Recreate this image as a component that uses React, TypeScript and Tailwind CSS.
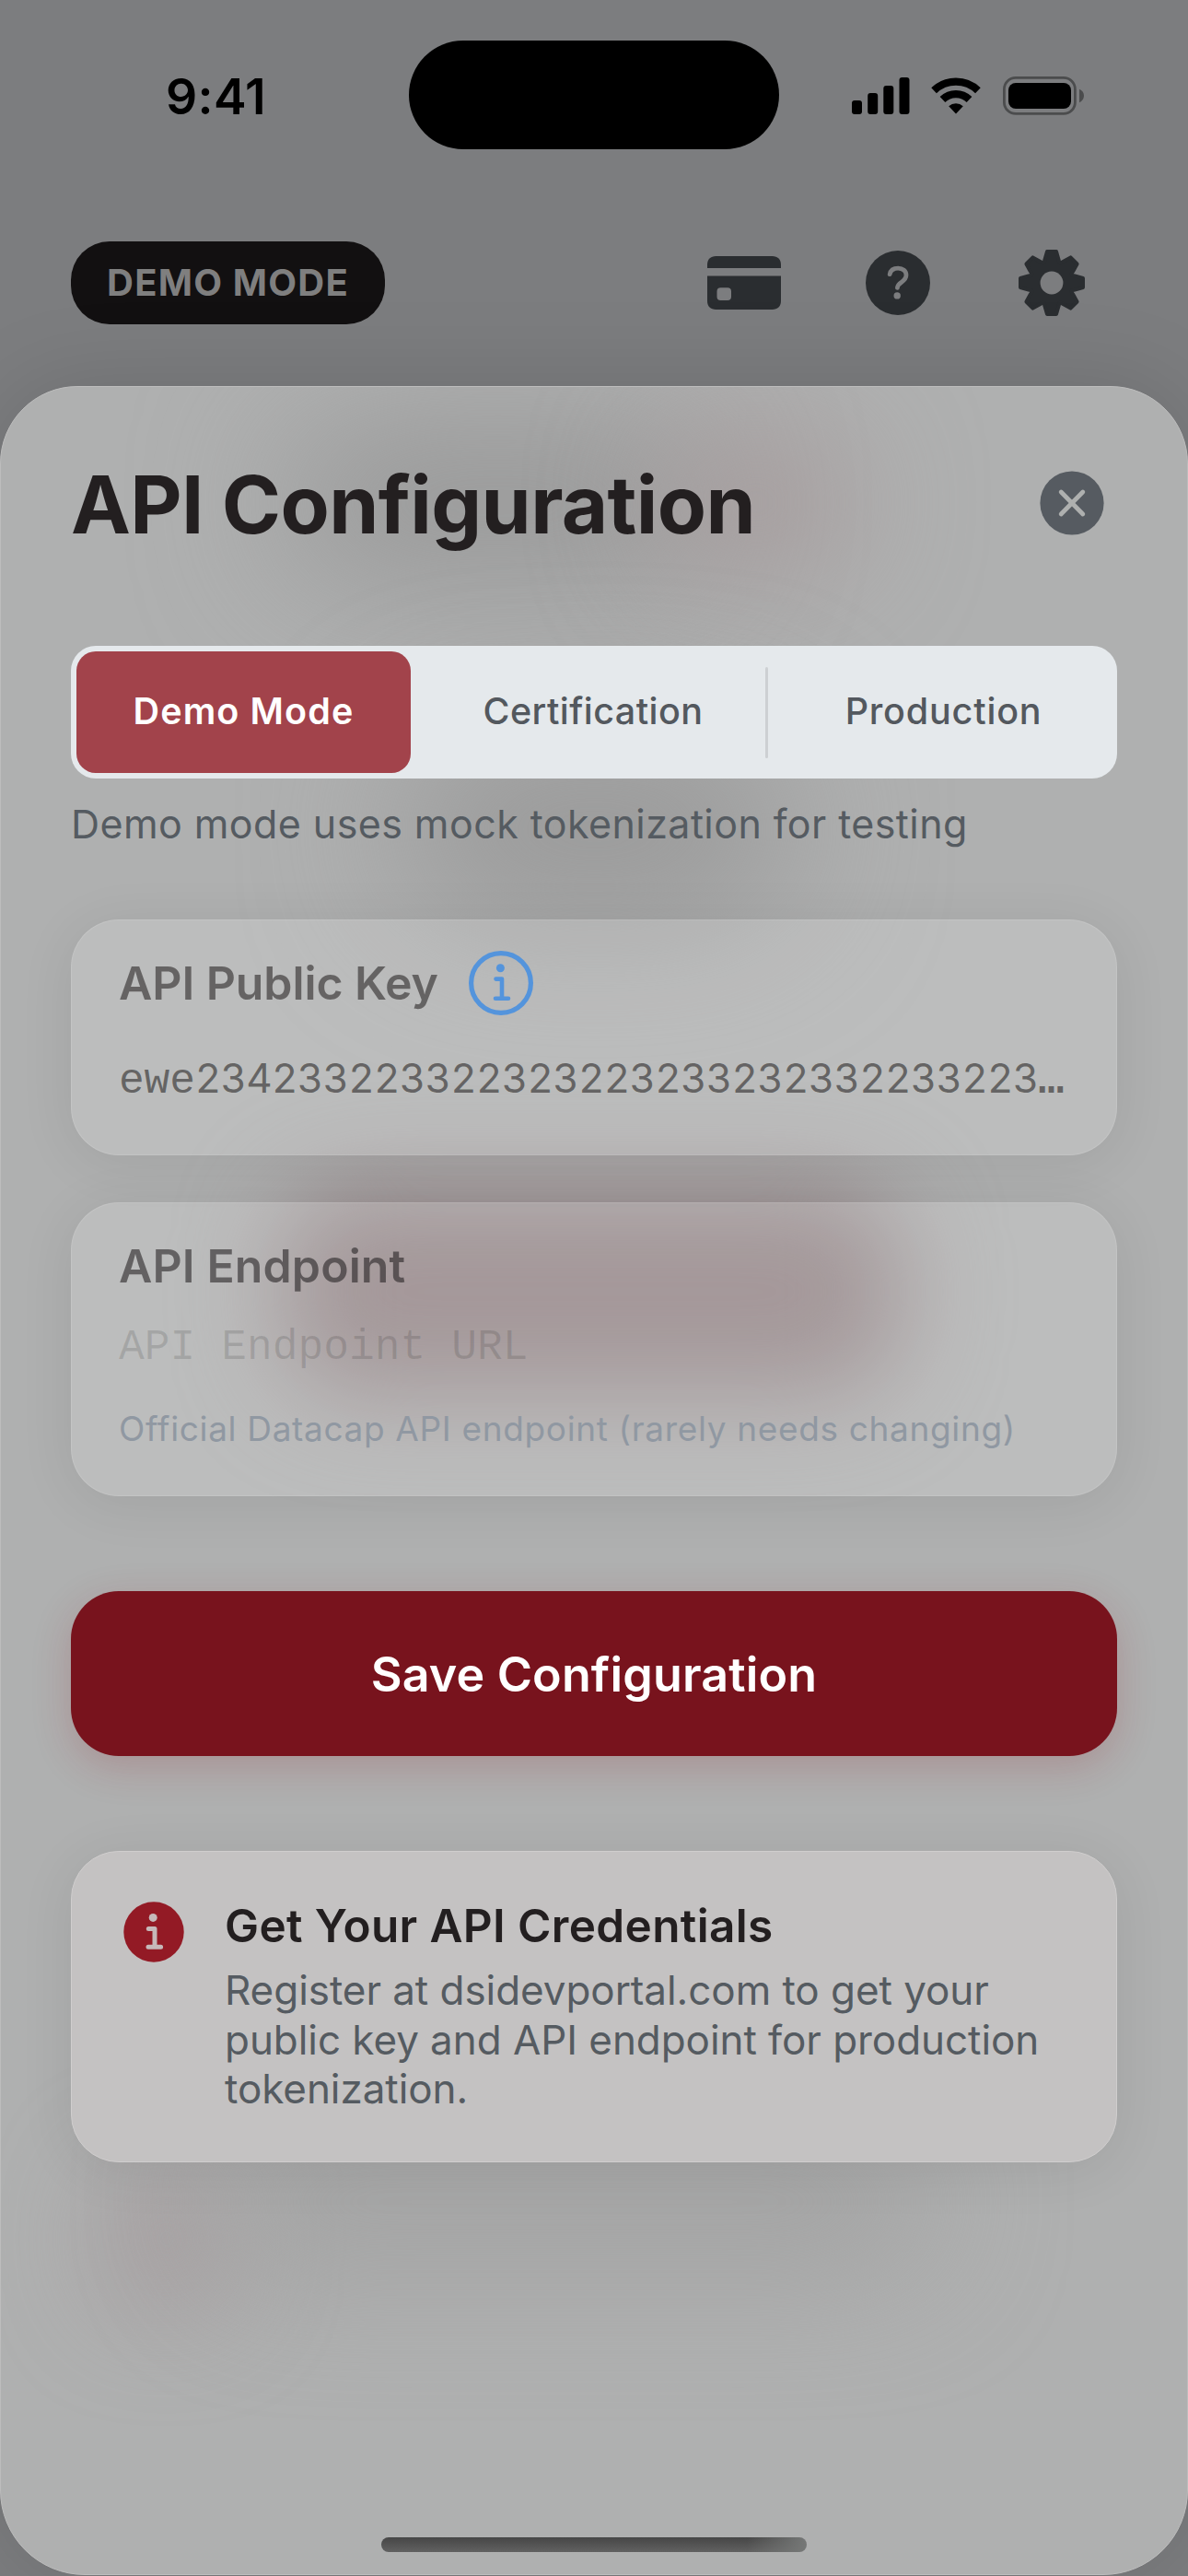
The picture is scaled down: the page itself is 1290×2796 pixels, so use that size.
import React from 'react';

const MUTED = 'text-[#555b61]';

function Signal() {
  return (
    <svg width="63" height="40" viewBox="0 0 63 40" fill="#000">
      <rect x="0" y="25" width="11" height="15" rx="3" />
      <rect x="17.2" y="17" width="11" height="23" rx="3" />
      <rect x="34.3" y="9" width="11" height="31" rx="3" />
      <rect x="51.5" y="0" width="11" height="40" rx="3" />
    </svg>
  );
}

function Wifi() {
  return (
    <svg width="54" height="40" viewBox="0 0 54 40" fill="none" stroke="#000">
      <path d="M3.1 14.2A34.6 34.6 0 0 1 50.9 14.2" strokeWidth="8.2" />
      <path d="M12.5 24A20.8 20.8 0 0 1 41.5 24" strokeWidth="8.2" />
      <path d="M19.2 31.3A11.8 11.8 0 0 1 34.8 31.3L27 39.6Z" fill="#000" stroke="none" />
    </svg>
  );
}

function Battery() {
  return (
    <svg width="89" height="42" viewBox="0 0 89 42">
      <rect x="1.4" y="1.4" width="77" height="39" rx="12.5" fill="none" stroke="#4b4c4d" strokeWidth="2.8" />
      <rect x="6" y="7" width="68" height="28" rx="8" fill="#000" />
      <path d="M83 13.8C86 15.2 88 17.6 88 21C88 24.2 86 26.8 83 28.2Z" fill="#4b4c4d" />
    </svg>
  );
}

function CardIcon() {
  return (
    <svg width="80" height="58" viewBox="0 0 80 58" fill="#2a2d30">
      <path d="M0 13V9.5C0 3.5 3.5 0 9.5 0H70.5C76.5 0 80 3.5 80 9.5V13Z" />
      <path
        fillRule="evenodd"
        d="M0 21.5H80V48.5C80 54.5 76.5 58 70.5 58H9.5C3.5 58 0 54.5 0 48.5ZM14.5 34.3Q10.5 34.3 10.5 38.3V44Q10.5 48 14.5 48H22Q26 48 26 44V38.3Q26 34.3 22 34.3Z"
      />
    </svg>
  );
}

function HelpIcon() {
  return (
    <svg width="70" height="70" viewBox="0 0 70 70">
      <circle cx="35" cy="35" r="35" fill="#2a2d30" />
      <path
        d="M26.2 25.6C27 21.4 30.6 19.1 35.2 19.1C40.2 19.1 44 22.2 44 26.6C44 30.4 41.8 32.3 39 34.2C35.8 36.4 34.6 37.8 34.4 40.4"
        fill="none"
        stroke="#7c7d7f"
        strokeWidth="4.8"
        strokeLinecap="round"
      />
      <circle cx="34.2" cy="48.9" r="3.7" fill="#7c7d7f" />
    </svg>
  );
}

/* Eight-toothed gear; each tooth tapers slightly towards its tip. */
function gearPoints(): string {
  const tooth: [number, number][] = [
    [-8.2, -22],
    [-7.6, -25],
    [-5, -34],
    [5, -34],
    [7.6, -25],
    [8.2, -22],
  ];
  const out: string[] = [];
  for (let i = 0; i < 8; i++) {
    const a = (i * Math.PI) / 4;
    for (const [x, y] of tooth) {
      out.push(`${(x * Math.cos(a) - y * Math.sin(a)).toFixed(2)},${(x * Math.sin(a) + y * Math.cos(a)).toFixed(2)}`);
    }
  }
  return out.join(' ');
}

function GearIcon() {
  return (
    <svg width="72" height="72" viewBox="-36 -36 72 72">
      <polygon points={gearPoints()} fill="#2a2d30" stroke="#2a2d30" strokeWidth="4" strokeLinejoin="round" />
      <circle r="12.4" fill="#7c7d7f" />
    </svg>
  );
}

function CloseIcon() {
  return (
    <svg width="70" height="70" viewBox="0 0 70 70">
      <circle cx="35" cy="35" r="34.6" fill="#565b61" />
      <path d="M23.2 23L46.8 47M46.8 23L23.2 47" stroke="#aeb0af" strokeWidth="4.8" strokeLinecap="round" />
    </svg>
  );
}

function InfoOutline() {
  return (
    <svg width="70" height="70" viewBox="0 0 70 70" fill="none" stroke="#5494dc" strokeLinecap="round" strokeLinejoin="round">
      <circle cx="35" cy="35" r="32.4" strokeWidth="5.2" />
      <path d="M29.5 30.6H36V51.8M29 51.8H43" strokeWidth="4.6" />
      <circle cx="34.4" cy="18.8" r="4.5" fill="#5494dc" stroke="none" />
    </svg>
  );
}

function InfoFilled() {
  return (
    <svg width="66" height="66" viewBox="0 0 66 66" fill="none" stroke="#c6b9ba" strokeLinecap="round" strokeLinejoin="round">
      <circle cx="33" cy="33" r="32.7" fill="#931a25" stroke="none" />
      <path d="M27.3 29.4H34V49.2M27 49.2H40.6" strokeWidth="5" />
      <circle cx="32.2" cy="17.4" r="4.5" fill="#c6b9ba" stroke="none" />
    </svg>
  );
}

const GLASS = 'shrink-0 rounded-[52px] border shadow-[0_8px_60px_rgba(0,0,0,0.08)]';

export default function App() {
  return (
    <div className="flex h-[2796px] w-[1290px] flex-col overflow-hidden bg-[#7c7d7f] font-['Inter',sans-serif]">
      {/* Status bar */}
      <div className="flex h-[206px] shrink-0 items-start">
        <div className="mt-[72px] w-[444px] pl-[180px] text-[53.5px] leading-[66px] font-semibold tracking-[0.3px] text-black">9:41</div>
        <div className="mt-[44px] h-[118px] w-[402px] rounded-full bg-black" />
        <div className="mt-[83px] ml-[79px] flex items-start">
          <div className="mt-px"><Signal /></div>
          <div className="mt-px ml-[23px]"><Wifi /></div>
          <div className="ml-[24px]"><Battery /></div>
        </div>
      </div>

      {/* App toolbar */}
      <div className="flex h-[213px] shrink-0 items-start pt-[56px] pl-[77px]">
        <div className="flex h-[90px] w-[341px] items-center justify-center rounded-[42px] bg-[#121011] text-[40px] font-[650] tracking-[1.2px] text-[#7f7f7f]">
          DEMO MODE
        </div>
        <div className="ml-[350px] flex h-[90px] items-center">
          <CardIcon />
          <div className="ml-[92px]"><HelpIcon /></div>
          <div className="ml-[96px]"><GearIcon /></div>
        </div>
      </div>

      {/* Sheet */}
      <div className="relative isolate flex h-[2376px] shrink-0 flex-col overflow-hidden rounded-t-[84px] rounded-b-[92px] border border-[#bdbdbd] bg-[#afb0b0] px-[76px] shadow-[0_0_100px_rgba(0,0,0,0.13)]">
        {/* Content of the screen below, seen through the glass */}
        <div className="absolute top-[50px] left-[310px] -z-10 h-[150px] w-[460px] rounded-full bg-[#959595] blur-[80px]" />
        <div className="absolute top-[60px] left-[720px] -z-10 h-[130px] w-[200px] rounded-full bg-[#a5999a] blur-[70px]" />
        <div className="absolute top-[380px] left-[430px] -z-10 h-[200px] w-[430px] rounded-full bg-[#999999] blur-[80px]" />
        <div className="absolute top-[872px] left-[305px] -z-10 h-[220px] w-[670px] rounded-[80px] bg-[#928385] blur-[54px]" />
        <div className="absolute top-[1940px] left-[120px] -z-10 h-[140px] w-[120px] rounded-full bg-[#a3999b] blur-[60px]" />
        <div className="absolute top-[1900px] left-[230px] -z-10 h-[140px] w-[780px] rounded-full bg-[#a2a2a2] blur-[70px]" />

        <div className="flex h-[281px] shrink-0 items-start justify-between pr-[14px]">
          <h1 className="mt-[78px] text-[87px] leading-[100px] font-bold tracking-[-0.65px] whitespace-nowrap text-[#231f20]">API Configuration</h1>
          <div className="mt-[91px]"><CloseIcon /></div>
        </div>

        {/* Environment selector */}
        <div className="flex h-[144px] w-[1136px] shrink-0 items-center rounded-[27px] bg-[#e5e9ec] px-[6px] text-[39.5px]">
          <div className="flex h-[132px] w-[363px] items-center justify-center rounded-[21px] bg-[#a2434b] font-[560] tracking-[1.1px] text-white">Demo Mode</div>
          <div className="flex h-[132px] w-[385px] items-center justify-center pl-[11px] font-[450] tracking-[0.45px] text-[#53585e]">Certification</div>
          <div className="h-[99px] w-[3px] rounded-full bg-[#cdd0d3]" />
          <div className="flex h-[132px] flex-1 items-center justify-center pl-[8px] font-[450] tracking-[0.8px] text-[#53585e]">Production</div>
        </div>
        <p className={`mt-[19px] shrink-0 text-[43px] leading-[60px] tracking-[0.42px] ${MUTED}`}>Demo mode uses mock tokenization for testing</p>

        {/* Public key */}
        <div className={`mt-[74px] flex h-[256px] w-[1136px] flex-col border-white/10 bg-white/17 px-[51px] pt-[33px] ${GLASS}`}>
          <div className="flex h-[70px] items-center gap-[33px]">
            <span className="text-[50px] font-semibold tracking-[-0.1px] whitespace-nowrap text-[#231f20]/57">API Public Key</span>
            <InfoOutline />
          </div>
          <div className="mt-[38px] flex h-[60px] items-baseline text-[#231f20]/57">
            <span className="font-['Liberation_Mono',monospace] text-[46.3px] leading-[60px] tracking-[-0.2px]">ewe</span>
            <span className="text-[44px] leading-[60px] tracking-[-0.78px] tabular-nums">234233223322323223233232332233223</span>
            <span className="font-['Liberation_Mono',monospace] text-[46.3px] leading-[60px] font-bold">…</span>
          </div>
        </div>

        {/* Endpoint */}
        <div className={`mt-[51px] flex h-[319px] w-[1136px] flex-col border-white/10 bg-white/17 px-[51px] pt-[38px] whitespace-nowrap ${GLASS}`}>
          <div className="text-[50px] leading-[60px] font-semibold tracking-[0.1px] text-[#231f20]/58">API Endpoint</div>
          <div className="mt-[29px] font-['Liberation_Mono',monospace] text-[46.3px] leading-[60px] text-black/12">API Endpoint URL</div>
          <div className="mt-[28px] text-[37px] leading-[60px] tracking-[0.65px] text-[#9098a2]">Official Datacap API endpoint (rarely needs changing)</div>
        </div>

        <button className="mt-[103px] flex h-[179px] w-[1136px] shrink-0 items-center justify-center rounded-[52px] bg-[#78131d] pt-[3px] text-[52px] font-semibold tracking-[0.15px] text-white shadow-[0_12px_44px_rgba(147,26,37,0.2)]">
          Save Configuration
        </button>

        {/* Credentials hint */}
        <div className={`mt-[103px] flex h-[338px] w-[1136px] border-[#d0cece] bg-[#c4c2c2] px-[56px] ${GLASS}`}>
          <div className="mt-[54px]"><InfoFilled /></div>
          <div className="mt-[50px] ml-[44px] whitespace-nowrap">
            <div className="text-[49.5px] leading-[60px] font-semibold tracking-[0.35px] text-[#231f20]">Get Your API Credentials</div>
            <div className={`mt-[14px] text-[44px] leading-[53.5px] tracking-[-0.06px] ${MUTED}`}>
              Register at dsidevportal.com to get your
              <br />
              public key and API endpoint for production
              <br />
              tokenization.
            </div>
          </div>
        </div>

        {/* Home indicator */}
        <div className="mt-auto mb-[24px] h-[16px] w-[462px] shrink-0 self-center rounded-full bg-[linear-gradient(90deg,transparent_86%,#767877_100%),linear-gradient(180deg,#464646,#616161)]" />
      </div>
    </div>
  );
}
